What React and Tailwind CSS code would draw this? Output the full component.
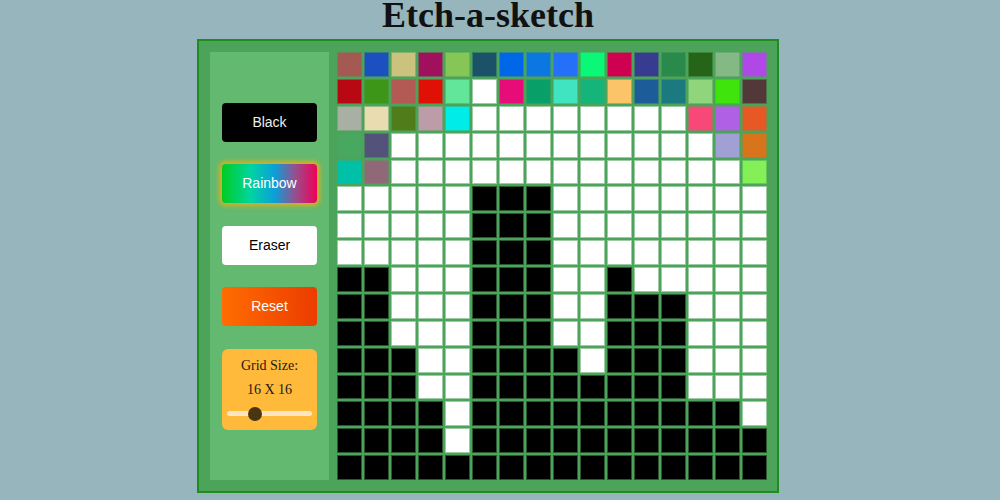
const W = 'w';
const K = 'k';

// first five rows are painted in random colours, the rest is the drawing
const colourRows = [
  ['#a45a52', '#1c4fbf', '#cbc27e', '#a0105c', '#86c656', '#1c5268', '#0068e8', '#0a78e0', '#2470f8', '#0af878', '#d00050', '#383c90', '#2a8a4c', '#266418', '#84b884', '#b048e8'],
  ['#b80814', '#3e9618', '#b45a54', '#e01006', '#62e69a', W, '#e80c78', '#08a068', '#40e4c0', '#14b47a', '#fcc468', '#1c5c98', '#1a7a80', '#90d47c', '#3ee40c', '#523838'],
  ['#a8b0a4', '#e8dcb0', '#507c1a', '#bc9ca8', '#00ece8', W, W, W, W, W, W, W, W, '#f84878', '#b060e4', '#e85824'],
  ['#48a860', '#52527a', W, W, W, W, W, W, W, W, W, W, W, W, '#a0a0d4', '#d8741c'],
  ['#00c0a8', '#906878', W, W, W, W, W, W, W, W, W, W, W, W, W, '#84f058'],
];

const drawing = [
  '.....###........',
  '.....###........',
  '.....###........',
  '##...###..#.....',
  '##...###..###...',
  '##...###..###...',
  '###..####.###...',
  '###..########...',
  '####.##########.',
  '####.###########',
  '################',
];

const rows = [
  ...colourRows,
  ...drawing.map((line) => line.split('').map((ch) => (ch === '#' ? K : W))),
];

function Cell({ colour }) {
  const bg = colour === W ? '#ffffff' : colour === K ? '#000000' : colour;
  return <div className="border border-[rgba(76,163,90,0.55)]" style={{ backgroundColor: bg }} />;
}

function PanelButton({ className, children }) {
  return (
    <button className={`w-[95px] h-[39px] rounded-[4px] text-[14px] ${className}`}>
      {children}
    </button>
  );
}

export default function App() {
  return (
    <div className="min-h-[500px] bg-[#97b5bd]">
      <div className="w-[976px] flex flex-col items-center">
        <h1 className="h-[30px] leading-[30px] text-[36px] font-bold text-[#111] font-['Liberation_Serif',serif]">
          Etch-a-sketch
        </h1>

        <div className="mt-[9px] w-[582px] h-[454px] border-2 border-[#1e8c1e] bg-[#4ca35a] pl-[11px] pr-[10px] py-[11px] flex gap-[8px]">
          {/* Controls */}
          <div className="w-[119px] bg-[#63b970] flex flex-col items-center justify-center gap-[22.5px] font-['Liberation_Sans',Arial,sans-serif]">
            <PanelButton className="bg-black text-[#eeeeee]">Black</PanelButton>
            <PanelButton className="text-white bg-[linear-gradient(to_right,#00cc22_0%,#00d4a0_30%,#0aa0d8_55%,#9a4c8c_78%,#f00058_100%)] shadow-[0_0_4px_3px_rgba(230,175,20,0.85)]">
              Rainbow
            </PanelButton>
            <PanelButton className="bg-white text-black">Eraser</PanelButton>
            <PanelButton className="text-white bg-[linear-gradient(to_right,#ff6c00,#ec3c00)]">Reset</PanelButton>

            <div className="w-[95px] h-[81px] rounded-[6px] bg-[#ffb93b] flex flex-col items-center pt-[9px] font-['Liberation_Serif',serif] text-[14px] text-[#1a1a1a]">
              <p className="leading-[16px]">Grid Size:</p>
              <p className="leading-[16px] mt-[8px]">16 X 16</p>
              <div className="relative mt-[9px] w-[85px] h-[14px] flex items-center">
                <div className="w-full h-[5px] rounded-full bg-[#ffe6c0]" />
                <div className="absolute left-[21px] top-0 w-[14px] h-[14px] rounded-full bg-[#4a3511]" />
              </div>
            </div>
          </div>

          {/* Sketch grid */}
          <div className="w-[430px] h-[428px] grid grid-cols-16 grid-rows-16 gap-[2px]">
            {rows.map((row, r) =>
              row.map((colour, c) => <Cell key={`${r}-${c}`} colour={colour} />)
            )}
          </div>
        </div>
      </div>
    </div>
  );
}
